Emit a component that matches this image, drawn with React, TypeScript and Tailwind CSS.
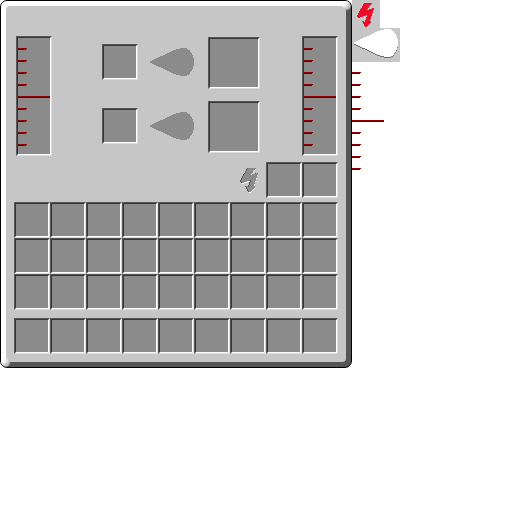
import React from "react";

const dropPath = "M-1 14L22 3Q29 0 34 0Q39 0 42 6Q44 10 44 14Q44 18 42 22Q39 28 34 28Q29 28 22 25Z";
const boltPath = "M7 0H15L10 7L16 5L17 6L13 18L15 19L9 24H8L5 18L8 19L10 12L1 15L0 13Z";

function Slot({ size = "w-9 h-9", label }: { size?: string; label: string }) {
  return (
    <button
      type="button"
      aria-label={label}
      className={`${size} block shrink-0 border border-t-[#555555] border-l-[#555555] border-r-[#dddddd] border-b-[#dddddd]`}
    >
      <span className="block h-full w-full border border-t-[#373737] border-l-[#373737] border-r-white border-b-white bg-[#8b8b8b]" />
    </button>
  );
}

function Ticks() {
  return (
    <div className="flex flex-col gap-[10px]">
      {Array.from({ length: 9 }, (_, i) => (
        <div key={i} className={i === 4 ? "w-8" : "w-[9px]"}>
          <div className="h-px bg-[#8b0000]" />
          <div className={i === 4 ? "h-px bg-[#650000]" : "mr-px h-px bg-[#650000]"} />
        </div>
      ))}
    </div>
  );
}

function Gauge() {
  return (
    <div className="h-[120px] w-9 shrink-0 border border-t-[#555555] border-l-[#555555] border-r-[#dddddd] border-b-[#dddddd]">
      <div className="h-full border border-t-[#373737] border-l-[#373737] border-r-white border-b-white bg-[#8b8b8b] pt-[10px]">
        <Ticks />
      </div>
    </div>
  );
}

export default function App() {
  return (
    <main className="flex min-h-screen items-start bg-white">
      <section className="relative w-[352px] shrink-0 overflow-hidden rounded-[7px] border border-black bg-[linear-gradient(to_bottom_right,#ffffff_50%,#555555_50%)] p-[5px]">
        <span className="absolute top-0 right-0 h-[9px] w-[9px] rounded-full bg-[radial-gradient(circle_at_20%_20%,#ffffff_20%,#8b8b8b_100%)]" />
        <span className="absolute bottom-0 left-0 h-[9px] w-[9px] rounded-full bg-[radial-gradient(circle_at_20%_20%,#ffffff_20%,#8b8b8b_100%)]" />
        <div className="rounded-tl-[4px] rounded-br-[4px] bg-[#c6c6c6] px-2 pb-2 pt-[30px]">
          <div className="flex justify-between pl-[2px]">
            <Gauge />
            <div className="flex flex-col gap-3 pt-px pl-2">
              {[0, 1].map((i) => (
                <div key={i} className="flex items-start">
                  <div className="flex items-center pt-[7px]">
                    <Slot label={`Input ${i + 1}`} />
                    <svg width="44" height="28" viewBox="0 0 44 28" shapeRendering="crispEdges" className="mr-[14px] ml-3" aria-hidden="true">
                      <path d={dropPath} fill="#8b8b8b" />
                    </svg>
                  </div>
                  <Slot size="h-[52px] w-[52px]" label={`Tank ${i + 1}`} />
                </div>
              ))}
            </div>
            <Gauge />
          </div>
          <div className="mt-[6px] flex items-center justify-end">
            <svg width="18" height="26" viewBox="-1 -1 18 26" shapeRendering="crispEdges" className="mr-2" role="img" aria-label="Energy">
              <path d={boltPath} fill="#ffffff" transform="translate(0 1)" />
              <path d={boltPath} fill="#555555" transform="translate(-1 0)" />
              <path d={boltPath} fill="#8b8b8b" />
            </svg>
            <Slot label="Energy 1" />
            <Slot label="Energy 2" />
          </div>
          <div className="mt-1 grid grid-cols-9">
            {Array.from({ length: 27 }, (_, i) => <Slot key={i} label={`Inventory ${i + 1}`} />)}
          </div>
          <div className="mt-2 grid grid-cols-9">
            {Array.from({ length: 9 }, (_, i) => <Slot key={i} label={`Hotbar ${i + 1}`} />)}
          </div>
        </div>
      </section>
      <aside>
        <div className="h-7 w-7 bg-[#c6c6c6] pt-[3px] pl-[5px]">
          <svg width="17" height="24" viewBox="0 0 17 24" shapeRendering="crispEdges" aria-hidden="true">
            <path d={boltPath} fill="#ed0c2a" />
          </svg>
        </div>
        <div className="mb-[10px] h-[34px] w-12 bg-[#c6c6c6] pt-px pl-[2px]">
          <svg width="45" height="30" viewBox="0 0 45 30" shapeRendering="crispEdges" aria-hidden="true">
            <path d={dropPath} fill="#6b6b6b" transform="translate(0 1)" />
            <path d={dropPath} fill="#ffffff" />
          </svg>
        </div>
        <Ticks />
      </aside>
    </main>
  );
}
